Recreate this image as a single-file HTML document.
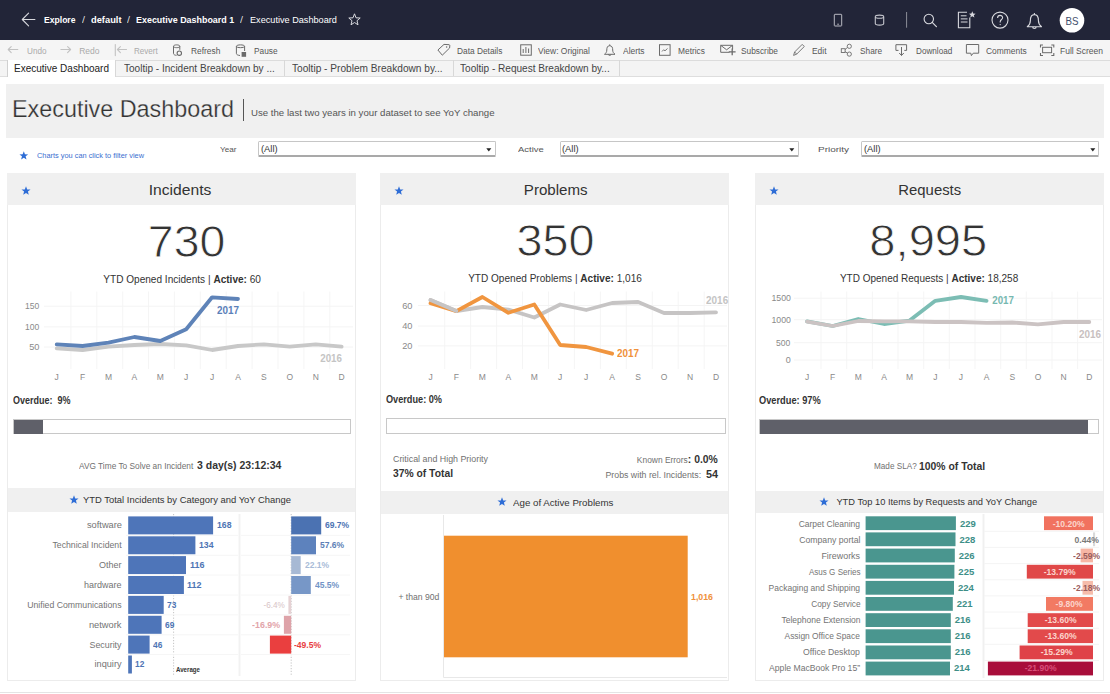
<!DOCTYPE html><html><head><meta charset="utf-8"><style>
html,body{margin:0;padding:0;width:1110px;height:694px;overflow:hidden;background:#fff;font-family:"Liberation Sans",sans-serif;}
#root{position:relative;width:1110px;height:694px;overflow:hidden;}
.t{position:absolute;white-space:nowrap;line-height:20px;}
.a{position:absolute;}
b{font-weight:700;}
</style></head><body><div id="root"><div class="a" style="left:0px;top:0px;width:1110px;height:40px;background:#222538;"></div>
<div class="a" style="left:0px;top:40px;width:1110px;height:20px;background:#f5f5f5;"></div>
<div class="a" style="left:0px;top:60px;width:1110px;height:16px;background:#f4f4f4;"></div>
<div class="a" style="left:0px;top:60px;width:1110px;height:1px;background:#dcdcdc;"></div>
<div class="a" style="left:0px;top:76px;width:1110px;height:1px;background:#dedede;"></div>
<div class="a" style="left:6.5px;top:60px;width:109px;height:17px;background:#fff;border-left:1px solid #d0d0d0;border-right:1px solid #d8d8d8;box-sizing:border-box;"></div>
<div class="a" style="left:284px;top:60px;width:1px;height:16px;background:#d8d8d8;"></div>
<div class="a" style="left:452.8px;top:60px;width:1px;height:16px;background:#d8d8d8;"></div>
<div class="a" style="left:619px;top:60px;width:1px;height:16px;background:#d8d8d8;"></div>
<div class="a" style="left:0px;top:77px;width:1110px;height:617px;background:#fff;"></div>
<div class="a" style="left:6px;top:84px;width:1098px;height:53.5px;background:#f0f0f0;"></div>
<div class="a" style="left:243px;top:98.5px;width:1.2px;height:22.3px;background:#555;"></div>
<div class="a" style="left:0px;top:691.5px;width:1110px;height:1.3px;background:#e4e4e4;"></div>
<svg class="a" style="left:19.2px;top:151.2px" width="9.6" height="9.6" viewBox="-10 -10 20 20"><path d="M0,-9.5 L2.4,-3.1 9.1,-2.9 3.8,1.2 5.6,7.7 0,4 -5.6,7.7 -3.8,1.2 -9.1,-2.9 -2.4,-3.1Z" fill="#2e6dd6"/></svg>
<div class="a" style="left:258.4px;top:141.3px;width:237.70000000000005px;height:15.6px;box-sizing:border-box;border:1px solid #c6c6c6;border-bottom:2px solid #a9a9a9;border-radius:1.5px;background:#fff"></div>
<svg class="a" style="left:486.3px;top:147.6px" width="6" height="5"><path d="M0.3,0.3 L5.3,0.3 2.8,3.6Z" fill="#222"/></svg>
<div class="a" style="left:559.5px;top:141.3px;width:239.10000000000002px;height:15.6px;box-sizing:border-box;border:1px solid #c6c6c6;border-bottom:2px solid #a9a9a9;border-radius:1.5px;background:#fff"></div>
<svg class="a" style="left:788.8000000000001px;top:147.6px" width="6" height="5"><path d="M0.3,0.3 L5.3,0.3 2.8,3.6Z" fill="#222"/></svg>
<div class="a" style="left:861.4px;top:141.3px;width:238.0000000000001px;height:15.6px;box-sizing:border-box;border:1px solid #c6c6c6;border-bottom:2px solid #a9a9a9;border-radius:1.5px;background:#fff"></div>
<svg class="a" style="left:1089.6000000000001px;top:147.6px" width="6" height="5"><path d="M0.3,0.3 L5.3,0.3 2.8,3.6Z" fill="#222"/></svg>
<div class="a" style="left:7px;top:173px;width:349px;height:507.5px;box-sizing:border-box;border:1px solid #ececec;background:#fff"></div>
<div class="a" style="left:7px;top:173px;width:349px;height:32px;background:#f0f0f0;"></div>
<div class="a" style="left:380px;top:173px;width:349px;height:507.5px;box-sizing:border-box;border:1px solid #ececec;background:#fff"></div>
<div class="a" style="left:380px;top:173px;width:349px;height:32px;background:#f0f0f0;"></div>
<div class="a" style="left:755px;top:173px;width:349px;height:507.5px;box-sizing:border-box;border:1px solid #ececec;background:#fff"></div>
<div class="a" style="left:755px;top:173px;width:349px;height:32px;background:#f0f0f0;"></div>
<svg class="a" style="left:21px;top:186px" width="10" height="10" viewBox="-10 -10 20 20"><path d="M0,-9.5 L2.4,-3.1 9.1,-2.9 3.8,1.2 5.6,7.7 0,4 -5.6,7.7 -3.8,1.2 -9.1,-2.9 -2.4,-3.1Z" fill="#2e6dd6"/></svg>
<svg class="a" style="left:394px;top:185.5px" width="10" height="10" viewBox="-10 -10 20 20"><path d="M0,-9.5 L2.4,-3.1 9.1,-2.9 3.8,1.2 5.6,7.7 0,4 -5.6,7.7 -3.8,1.2 -9.1,-2.9 -2.4,-3.1Z" fill="#2e6dd6"/></svg>
<svg class="a" style="left:769px;top:185.5px" width="10" height="10" viewBox="-10 -10 20 20"><path d="M0,-9.5 L2.4,-3.1 9.1,-2.9 3.8,1.2 5.6,7.7 0,4 -5.6,7.7 -3.8,1.2 -9.1,-2.9 -2.4,-3.1Z" fill="#2e6dd6"/></svg>
<svg class="a" style="left:0;top:0" width="1110" height="694"><line x1="70.9" y1="291.5" x2="70.9" y2="369" stroke="#f5f5f5" stroke-width="1"/><line x1="96.8" y1="291.5" x2="96.8" y2="369" stroke="#f5f5f5" stroke-width="1"/><line x1="122.7" y1="291.5" x2="122.7" y2="369" stroke="#f5f5f5" stroke-width="1"/><line x1="148.5" y1="291.5" x2="148.5" y2="369" stroke="#f5f5f5" stroke-width="1"/><line x1="174.4" y1="291.5" x2="174.4" y2="369" stroke="#f5f5f5" stroke-width="1"/><line x1="200.3" y1="291.5" x2="200.3" y2="369" stroke="#f5f5f5" stroke-width="1"/><line x1="226.2" y1="291.5" x2="226.2" y2="369" stroke="#f5f5f5" stroke-width="1"/><line x1="252.1" y1="291.5" x2="252.1" y2="369" stroke="#f5f5f5" stroke-width="1"/><line x1="278.0" y1="291.5" x2="278.0" y2="369" stroke="#f5f5f5" stroke-width="1"/><line x1="303.9" y1="291.5" x2="303.9" y2="369" stroke="#f5f5f5" stroke-width="1"/><line x1="329.8" y1="291.5" x2="329.8" y2="369" stroke="#f5f5f5" stroke-width="1"/><line x1="44" y1="306.2" x2="353" y2="306.2" stroke="#f4f4f4" stroke-width="1"/><line x1="44" y1="326.9" x2="353" y2="326.9" stroke="#f4f4f4" stroke-width="1"/><line x1="44" y1="347" x2="353" y2="347" stroke="#f4f4f4" stroke-width="1"/><polyline points="56.7,348.3 82.6,350 108.5,346.7 134.4,345 160.3,344 186.2,345.3 212.1,350 238.0,346 263.9,344.3 289.8,346.7 315.7,344.3 341.6,346.7" fill="none" stroke="#c8c8c8" stroke-width="3.8" stroke-linejoin="round" stroke-linecap="round"/><polyline points="56.7,344.3 82.6,346 108.5,342.7 134.4,337 160.3,341 186.2,329.3 212.1,297.3 238.0,299" fill="none" stroke="#5e83b8" stroke-width="3.8" stroke-linejoin="round" stroke-linecap="round"/><line x1="444.7" y1="291.5" x2="444.7" y2="369" stroke="#f5f5f5" stroke-width="1"/><line x1="470.6" y1="291.5" x2="470.6" y2="369" stroke="#f5f5f5" stroke-width="1"/><line x1="496.6" y1="291.5" x2="496.6" y2="369" stroke="#f5f5f5" stroke-width="1"/><line x1="522.5" y1="291.5" x2="522.5" y2="369" stroke="#f5f5f5" stroke-width="1"/><line x1="548.5" y1="291.5" x2="548.5" y2="369" stroke="#f5f5f5" stroke-width="1"/><line x1="574.4" y1="291.5" x2="574.4" y2="369" stroke="#f5f5f5" stroke-width="1"/><line x1="600.4" y1="291.5" x2="600.4" y2="369" stroke="#f5f5f5" stroke-width="1"/><line x1="626.3" y1="291.5" x2="626.3" y2="369" stroke="#f5f5f5" stroke-width="1"/><line x1="652.3" y1="291.5" x2="652.3" y2="369" stroke="#f5f5f5" stroke-width="1"/><line x1="678.2" y1="291.5" x2="678.2" y2="369" stroke="#f5f5f5" stroke-width="1"/><line x1="704.2" y1="291.5" x2="704.2" y2="369" stroke="#f5f5f5" stroke-width="1"/><line x1="418" y1="305.5" x2="727" y2="305.5" stroke="#f4f4f4" stroke-width="1"/><line x1="418" y1="326" x2="727" y2="326" stroke="#f4f4f4" stroke-width="1"/><line x1="418" y1="345.9" x2="727" y2="345.9" stroke="#f4f4f4" stroke-width="1"/><polyline points="430.5,300 456.4,311 482.4,307 508.4,309.6 534.3,317.5 560.2,304.5 586.2,310 612.1,303 638.1,302 664.0,313 690.0,313 716.0,312.4" fill="none" stroke="#c6c4c4" stroke-width="3.8" stroke-linejoin="round" stroke-linecap="round"/><polyline points="430.5,303.3 456.4,311.2 482.4,297 508.4,312.8 534.3,304.5 560.2,345 586.2,347 612.1,353.7" fill="none" stroke="#f0953f" stroke-width="3.8" stroke-linejoin="round" stroke-linecap="round"/><polyline points="430.5,300 456.4,311" fill="none" stroke="#c6c4c4" stroke-width="3.8" stroke-linejoin="round" stroke-linecap="round"/><line x1="821.0" y1="291.5" x2="821.0" y2="369" stroke="#f5f5f5" stroke-width="1"/><line x1="846.7" y1="291.5" x2="846.7" y2="369" stroke="#f5f5f5" stroke-width="1"/><line x1="872.4" y1="291.5" x2="872.4" y2="369" stroke="#f5f5f5" stroke-width="1"/><line x1="898.0" y1="291.5" x2="898.0" y2="369" stroke="#f5f5f5" stroke-width="1"/><line x1="923.7" y1="291.5" x2="923.7" y2="369" stroke="#f5f5f5" stroke-width="1"/><line x1="949.3" y1="291.5" x2="949.3" y2="369" stroke="#f5f5f5" stroke-width="1"/><line x1="975.0" y1="291.5" x2="975.0" y2="369" stroke="#f5f5f5" stroke-width="1"/><line x1="1000.7" y1="291.5" x2="1000.7" y2="369" stroke="#f5f5f5" stroke-width="1"/><line x1="1026.3" y1="291.5" x2="1026.3" y2="369" stroke="#f5f5f5" stroke-width="1"/><line x1="1052.0" y1="291.5" x2="1052.0" y2="369" stroke="#f5f5f5" stroke-width="1"/><line x1="1077.6" y1="291.5" x2="1077.6" y2="369" stroke="#f5f5f5" stroke-width="1"/><line x1="794" y1="298.2" x2="1102" y2="298.2" stroke="#f4f4f4" stroke-width="1"/><line x1="794" y1="319.7" x2="1102" y2="319.7" stroke="#f4f4f4" stroke-width="1"/><line x1="794" y1="342.7" x2="1102" y2="342.7" stroke="#f4f4f4" stroke-width="1"/><line x1="794" y1="360" x2="1102" y2="360" stroke="#f4f4f4" stroke-width="1"/><polyline points="807.0,321.3 832.7,326 858.3,319 884.0,324 909.6,320.6 935.3,300.8 961.0,297 986.6,300.8" fill="none" stroke="#7cbdb4" stroke-width="3.8" stroke-linejoin="round" stroke-linecap="round"/><polyline points="807.0,321.6 832.7,326 858.3,321 884.0,321.4 909.6,321.4 935.3,322 961.0,322 986.6,322.8 1012.3,322.5 1037.9,324.4 1063.6,322 1089.3,322" fill="none" stroke="#cbc3c3" stroke-width="3.8" stroke-linejoin="round" stroke-linecap="round"/></svg>
<div class="a" style="left:13.3px;top:419.3px;width:337.4px;height:15px;box-sizing:border-box;border:1px solid #c8c8c8;background:#fff"></div>
<div class="a" style="left:13.8px;top:419.8px;width:28.8px;height:14px;background:#5f6069;"></div>
<div class="a" style="left:385.7px;top:418.3px;width:340px;height:16px;box-sizing:border-box;border:1px solid #c8c8c8;background:#fff"></div>
<div class="a" style="left:759.3px;top:419px;width:339.7px;height:15.3px;box-sizing:border-box;border:1px solid #c8c8c8;background:#fff"></div>
<div class="a" style="left:759.8px;top:419.5px;width:328px;height:14.3px;background:#5f6069;"></div>
<div class="a" style="left:8px;top:488.2px;width:347px;height:24px;background:#f0f0f0;"></div>
<div class="a" style="left:381px;top:490.5px;width:347px;height:23.5px;background:#f0f0f0;"></div>
<div class="a" style="left:756px;top:490.5px;width:347px;height:22.5px;background:#f0f0f0;"></div>
<svg class="a" style="left:68.8px;top:495.2px" width="10" height="10" viewBox="-10 -10 20 20"><path d="M0,-9.5 L2.4,-3.1 9.1,-2.9 3.8,1.2 5.6,7.7 0,4 -5.6,7.7 -3.8,1.2 -9.1,-2.9 -2.4,-3.1Z" fill="#2e6dd6"/></svg>
<svg class="a" style="left:497.2px;top:497.3px" width="10" height="10" viewBox="-10 -10 20 20"><path d="M0,-9.5 L2.4,-3.1 9.1,-2.9 3.8,1.2 5.6,7.7 0,4 -5.6,7.7 -3.8,1.2 -9.1,-2.9 -2.4,-3.1Z" fill="#2e6dd6"/></svg>
<svg class="a" style="left:818.8px;top:496.8px" width="10" height="10" viewBox="-10 -10 20 20"><path d="M0,-9.5 L2.4,-3.1 9.1,-2.9 3.8,1.2 5.6,7.7 0,4 -5.6,7.7 -3.8,1.2 -9.1,-2.9 -2.4,-3.1Z" fill="#2e6dd6"/></svg>
<svg class="a" style="left:0;top:0" width="1110" height="694"><rect x="126" y="514" width="112" height="162" fill="#fff"/><line x1="173.6" y1="514" x2="173.6" y2="676" stroke="#aaa" stroke-width="0.7" stroke-dasharray="1.2,1.6"/><line x1="291.2" y1="514" x2="291.2" y2="676" stroke="#aaa" stroke-width="0.7" stroke-dasharray="1.2,1.6"/><rect x="128.2" y="516.4" width="84.9" height="18" fill="#4e75b9"/><line x1="126" y1="535.4" x2="238" y2="535.4" stroke="#f6f6f6" stroke-width="1"/><line x1="241" y1="535.4" x2="350" y2="535.4" stroke="#f6f6f6" stroke-width="1"/><rect x="291.2" y="516.4" width="30.0" height="18" fill="#4b72b2"/><rect x="128.2" y="536.3" width="67.2" height="18" fill="#4e75b9"/><line x1="126" y1="555.3" x2="238" y2="555.3" stroke="#f6f6f6" stroke-width="1"/><line x1="241" y1="555.3" x2="350" y2="555.3" stroke="#f6f6f6" stroke-width="1"/><rect x="291.2" y="536.3" width="24.8" height="18" fill="#5d82bd"/><rect x="128.2" y="556.1" width="57.8" height="18" fill="#4e75b9"/><line x1="126" y1="575.1" x2="238" y2="575.1" stroke="#f6f6f6" stroke-width="1"/><line x1="241" y1="575.1" x2="350" y2="575.1" stroke="#f6f6f6" stroke-width="1"/><rect x="291.2" y="556.1" width="9.5" height="18" fill="#a7b9d4"/><rect x="128.2" y="576.0" width="55.7" height="18" fill="#4e75b9"/><line x1="126" y1="595.0" x2="238" y2="595.0" stroke="#f6f6f6" stroke-width="1"/><line x1="241" y1="595.0" x2="350" y2="595.0" stroke="#f6f6f6" stroke-width="1"/><rect x="291.2" y="576.0" width="19.6" height="18" fill="#7797c7"/><rect x="128.2" y="595.9" width="35.5" height="18" fill="#4e75b9"/><line x1="126" y1="614.9" x2="238" y2="614.9" stroke="#f6f6f6" stroke-width="1"/><line x1="241" y1="614.9" x2="350" y2="614.9" stroke="#f6f6f6" stroke-width="1"/><rect x="288.4" y="595.9" width="2.8" height="18" fill="#e6d2d4"/><rect x="128.2" y="615.8" width="33.4" height="18" fill="#4e75b9"/><line x1="126" y1="634.8" x2="238" y2="634.8" stroke="#f6f6f6" stroke-width="1"/><line x1="241" y1="634.8" x2="350" y2="634.8" stroke="#f6f6f6" stroke-width="1"/><rect x="283.9" y="615.8" width="7.3" height="18" fill="#dea3a9"/><rect x="128.2" y="635.6" width="21.4" height="18" fill="#4e75b9"/><line x1="126" y1="654.6" x2="238" y2="654.6" stroke="#f6f6f6" stroke-width="1"/><line x1="241" y1="654.6" x2="350" y2="654.6" stroke="#f6f6f6" stroke-width="1"/><rect x="269.9" y="635.6" width="21.3" height="18" fill="#ea3f3f"/><rect x="128.2" y="655.5" width="3.7" height="18" fill="#4e75b9"/><line x1="239.5" y1="514" x2="239.5" y2="676" stroke="#f2f2f2" stroke-width="2"/><rect x="443.3" y="535.7" width="244.4" height="121.6" fill="#f08f2e"/><line x1="443.5" y1="515" x2="443.5" y2="677.5" stroke="#e8e8e8" stroke-width="1"/><line x1="443.5" y1="677.5" x2="727" y2="677.5" stroke="#e8e8e8" stroke-width="1"/><line x1="983.5" y1="514" x2="983.5" y2="678" stroke="#f0f0f0" stroke-width="2"/><rect x="865.6" y="516.3" width="90.3" height="13.8" fill="#4a968f"/><line x1="984" y1="531.3" x2="1099" y2="531.3" stroke="#f4f4f4" stroke-width="1"/><rect x="1044.0" y="516.3" width="49.0" height="13.8" fill="#f1725f"/><rect x="865.6" y="532.4" width="89.9" height="13.8" fill="#4a968f"/><line x1="984" y1="547.4" x2="1099" y2="547.4" stroke="#f4f4f4" stroke-width="1"/><rect x="1093" y="532.4" width="2.1" height="13.8" fill="#d9d9d9"/><rect x="865.6" y="548.6" width="89.2" height="13.8" fill="#4a968f"/><line x1="984" y1="563.6" x2="1099" y2="563.6" stroke="#f4f4f4" stroke-width="1"/><rect x="1080.6" y="548.6" width="12.4" height="13.8" fill="#f6b5a4"/><rect x="865.6" y="564.8" width="88.8" height="13.8" fill="#4a968f"/><line x1="984" y1="579.8" x2="1099" y2="579.8" stroke="#f4f4f4" stroke-width="1"/><rect x="1026.8" y="564.8" width="66.2" height="13.8" fill="#e04848"/><rect x="865.6" y="580.9" width="88.4" height="13.8" fill="#4a968f"/><line x1="984" y1="595.9" x2="1099" y2="595.9" stroke="#f4f4f4" stroke-width="1"/><rect x="1082.5" y="580.9" width="10.5" height="13.8" fill="#f6bcab"/><rect x="865.6" y="597.0" width="87.2" height="13.8" fill="#4a968f"/><line x1="984" y1="612.0" x2="1099" y2="612.0" stroke="#f4f4f4" stroke-width="1"/><rect x="1046.0" y="597.0" width="47.0" height="13.8" fill="#f27a63"/><rect x="865.6" y="613.2" width="85.2" height="13.8" fill="#4a968f"/><line x1="984" y1="628.2" x2="1099" y2="628.2" stroke="#f4f4f4" stroke-width="1"/><rect x="1027.7" y="613.2" width="65.3" height="13.8" fill="#e24a4b"/><rect x="865.6" y="629.3" width="85.2" height="13.8" fill="#4a968f"/><line x1="984" y1="644.3" x2="1099" y2="644.3" stroke="#f4f4f4" stroke-width="1"/><rect x="1027.7" y="629.3" width="65.3" height="13.8" fill="#e24a4b"/><rect x="865.6" y="645.5" width="85.2" height="13.8" fill="#4a968f"/><line x1="984" y1="660.5" x2="1099" y2="660.5" stroke="#f4f4f4" stroke-width="1"/><rect x="1019.6" y="645.5" width="73.4" height="13.8" fill="#df4248"/><rect x="865.6" y="661.6" width="84.4" height="13.8" fill="#4a968f"/><rect x="987.9" y="661.6" width="105.1" height="13.8" fill="#a80d3a"/></svg>
<svg class="a" style="left:0;top:0" width="1110" height="694"><path d="M34.9,19.5 H22.3 M28.6,13.2 L22.3,19.5 L28.6,25.8" fill="none" stroke="#d8d9de" stroke-width="1.1" stroke-linecap="round" stroke-linejoin="round"/><path d="M354.5,13.8 L356,17.8 360.2,18 357,20.7 358,24.8 354.5,22.5 351,24.8 352,20.7 348.8,18 353,17.8Z" fill="none" stroke="#d8d9de" stroke-width="1" stroke-linejoin="round"/><rect x="834.3" y="14.3" width="7.4" height="11.7" rx="0.6" fill="none" stroke="#b9bac2" stroke-width="1"/><rect x="837.4" y="23.6" width="1.3" height="1.3" fill="#b9bac2"/><path d="M875.3,16.8 V23.6 C875.3,25.6 883.7,25.6 883.7,23.6 V16.8 C883.7,14.6 875.3,14.6 875.3,16.8 C875.3,18.8 883.7,18.8 883.7,16.8" fill="none" stroke="#c4c5cc" stroke-width="1.1"/><line x1="906.6" y1="12" x2="906.6" y2="27.7" stroke="#8d8f99" stroke-width="1"/><circle cx="928.8" cy="19" r="4.7" fill="none" stroke="#d8d9de" stroke-width="1.1"/><line x1="932.2" y1="22.4" x2="936.4" y2="26.6" stroke="#d8d9de" stroke-width="1.2" stroke-linecap="round"/><path d="M969.8,17.5 V27.8 H958.4 V12.2 H967" fill="none" stroke="#d8d9de" stroke-width="1.1"/><path d="M960.8,15.8 H966.5 M960.8,18.9 H967.5 M960.8,22 H967.5" stroke="#d8d9de" stroke-width="1"/><path d="M972.3,11.3 L973.2,13.6 975.6,13.7 973.8,15.2 974.4,17.6 972.3,16.2 970.2,17.6 970.8,15.2 969,13.7 971.4,13.6Z" fill="#d8d9de"/><circle cx="1000" cy="20.1" r="8" fill="none" stroke="#d8d9de" stroke-width="1.1"/><path d="M997.6,17.9 C997.6,14.6 1002.6,14.6 1002.6,17.7 C1002.6,19.5 1000.2,19.6 1000.2,21.8 V22.5" fill="none" stroke="#d8d9de" stroke-width="1.1"/><circle cx="1000.2" cy="24.6" r="0.7" fill="#d8d9de"/><path d="M1034.4,14.6 C1031,14.6 1030.4,17.5 1030.4,20.5 C1030.4,23.5 1029.5,25 1027.3,26.8 H1041.5 C1039.3,25 1038.4,23.5 1038.4,20.5 C1038.4,17.5 1037.8,14.6 1034.4,14.6Z M1032.6,26.8 C1032.6,29 1036.2,29 1036.2,26.8 M1034.4,13 V14.6" fill="none" stroke="#d8d9de" stroke-width="1.1" stroke-linejoin="round"/><circle cx="1072" cy="20.2" r="12.3" fill="#ffffff"/><path d="M17.8,49.5 H8.2 M11.2,46.6 L8.2,49.5 L11.2,52.6" fill="none" stroke="#c2c2c2" stroke-width="1.1" stroke-linecap="round" stroke-linejoin="round"/><path d="M60.9,49.5 H70.6 M67.6,46.6 L70.6,49.5 L67.6,52.6" fill="none" stroke="#c2c2c2" stroke-width="1.1" stroke-linecap="round" stroke-linejoin="round"/><path d="M115.3,44.5 V55.6 M126.5,49.5 H117.4 M120.4,46.6 L117.4,49.5 L120.4,52.6" fill="none" stroke="#c2c2c2" stroke-width="1.1" stroke-linecap="round" stroke-linejoin="round"/><path d="M179.8,46.3 C179.8,44.4 173.5,44.4 173.5,46.3 V53.4 C173.5,54.7 175,55.2 176.5,55.4 M173.5,46.3 C173.5,48.1 179.8,48.1 179.8,46.3 V49.8" fill="none" stroke="#6b6b6b" stroke-width="1"/><circle cx="179.3" cy="53.2" r="2.2" fill="none" stroke="#6b6b6b" stroke-width="1.1"/><path d="M244.6,46.3 C244.6,44.4 236.4,44.4 236.4,46.3 V53.4 C236.4,54.8 238.2,55.3 240,55.5 M236.4,46.3 C236.4,48.1 244.6,48.1 244.6,46.3 V51" fill="none" stroke="#6b6b6b" stroke-width="1"/><rect x="241.6" y="52" width="4.5" height="4.8" fill="#6b6b6b"/><path d="M437.9,50 L444,44.4 L449.2,44.7 Q449.8,44.9 449.8,45.6 L449.6,48 L442.3,55.2Z" fill="none" stroke="#6b6b6b" stroke-width="1" stroke-linejoin="round"/><circle cx="446.6" cy="47.1" r="0.75" fill="#6b6b6b"/><rect x="520.7" y="44.8" width="10.6" height="10.4" fill="none" stroke="#6b6b6b" stroke-width="1"/><path d="M523.2,49 V53 M525.9,47 V53 M528.6,48.5 V53" stroke="#6b6b6b" stroke-width="1"/><path d="M609.7,45.7 C607.3,45.7 606.8,47.8 606.8,50 C606.8,52.2 606,53 604.5,54.3 H615 C613.5,53 612.7,52.2 612.7,50 C612.7,47.8 612.1,45.7 609.7,45.7Z M608.3,54.3 C608.3,55.8 611.1,55.8 611.1,54.3 M609.7,44.4 V45.7" fill="none" stroke="#6b6b6b" stroke-width="1" stroke-linejoin="round"/><rect x="659.5" y="44.7" width="10.6" height="10.6" fill="none" stroke="#6b6b6b" stroke-width="1"/><path d="M662,51.5 L663.6,49.8 L665,50.8 L667.5,48.5" fill="none" stroke="#6b6b6b" stroke-width="0.9"/><path d="M729.5,52.3 H720.7 V45.3 H732.6 V49.5 M720.7,45.3 L726.6,49.8 L732.6,45.3" fill="none" stroke="#6b6b6b" stroke-width="1"/><path d="M732.2,48.5 V55.3 M728.8,51.9 H735.6" stroke="#6b6b6b" stroke-width="1.3"/><path d="M793.6,55.4 L794.6,52 L802.2,44.4 L804.3,46.5 L796.7,54.1Z M794.6,52 L796.7,54.1" fill="none" stroke="#6b6b6b" stroke-width="0.9" stroke-linejoin="round"/><rect x="841.3" y="48.7" width="3.8" height="3.8" fill="none" stroke="#6b6b6b" stroke-width="0.9"/><circle cx="849.3" cy="46.3" r="2.1" fill="none" stroke="#6b6b6b" stroke-width="0.9"/><circle cx="849.3" cy="54.1" r="2.1" fill="none" stroke="#6b6b6b" stroke-width="0.9"/><path d="M845.1,49.6 L847.4,47.4 M845.1,51.7 L847.4,53" stroke="#6b6b6b" stroke-width="0.9"/><path d="M898.5,50.4 H895.9 V44.7 H906.6 V50.4 H904.3" fill="none" stroke="#6b6b6b" stroke-width="1"/><path d="M901.5,47 V55.4 M899.2,53 L901.5,55.5 L903.8,53" fill="none" stroke="#6b6b6b" stroke-width="1"/><path d="M966.4,44.5 H978.7 V53.2 H973.2 L971.4,55.6 L970.8,53.2 H966.4Z" fill="none" stroke="#6b6b6b" stroke-width="1" stroke-linejoin="round"/><path d="M1040.5,47.5 V45 H1043 M1051.3,45 H1053.8 V47.5 M1053.8,53 V55.5 H1051.3 M1043,55.5 H1040.5 V53" fill="none" stroke="#6b6b6b" stroke-width="1.1"/><rect x="1042.6" y="47.3" width="9" height="5.4" fill="none" stroke="#6b6b6b" stroke-width="1"/></svg><span class="t" style="font-size:9.5px;font-weight:700;color:#fff;top:10.20px;left:44.00px;transform:scaleX(0.9036);transform-origin:left center;">Explore</span><span class="t" style="font-size:9.5px;font-weight:400;color:#ddd;top:10.20px;left:82.00px;transform:scaleX(1.1361);transform-origin:left center;">/</span><span class="t" style="font-size:9.5px;font-weight:700;color:#fff;top:10.20px;left:90.50px;transform:scaleX(0.9794);transform-origin:left center;">default</span><span class="t" style="font-size:9.5px;font-weight:400;color:#ddd;top:10.20px;left:127.00px;transform:scaleX(1.1361);transform-origin:left center;">/</span><span class="t" style="font-size:9.5px;font-weight:700;color:#fff;top:10.20px;left:136.40px;transform:scaleX(0.9393);transform-origin:left center;">Executive Dashboard 1</span><span class="t" style="font-size:9.5px;font-weight:400;color:#ddd;top:10.20px;left:240.00px;transform:scaleX(1.1361);transform-origin:left center;">/</span><span class="t" style="font-size:9.5px;font-weight:400;color:#fff;top:10.20px;left:249.90px;transform:scaleX(0.9622);transform-origin:left center;">Executive Dashboard</span><span class="t" style="font-size:10.5px;font-weight:400;color:#3e4d6c;top:10.50px;left:1065.29px;transform:scaleX(0.9275);transform-origin:center center;">BS</span><span class="t" style="font-size:8.5px;font-weight:400;color:#aaa;top:41.20px;left:26.50px;transform:scaleX(0.9593);transform-origin:left center;">Undo</span><span class="t" style="font-size:8.5px;font-weight:400;color:#aaa;top:41.20px;left:79.20px;">Redo</span><span class="t" style="font-size:8.5px;font-weight:400;color:#aaa;top:41.20px;left:133.80px;transform:scaleX(0.9502);transform-origin:left center;">Revert</span><span class="t" style="font-size:8.5px;font-weight:400;color:#555;top:41.20px;left:191.00px;transform:scaleX(0.9844);transform-origin:left center;">Refresh</span><span class="t" style="font-size:8.5px;font-weight:400;color:#555;top:41.20px;left:254.00px;transform:scaleX(0.9789);transform-origin:left center;">Pause</span><span class="t" style="font-size:8.5px;font-weight:400;color:#555;top:41.20px;left:457.00px;transform:scaleX(0.9803);transform-origin:left center;">Data Details</span><span class="t" style="font-size:8.5px;font-weight:400;color:#555;top:41.20px;left:537.60px;transform:scaleX(0.9924);transform-origin:left center;">View: Original</span><span class="t" style="font-size:8.5px;font-weight:400;color:#555;top:41.20px;left:622.70px;transform:scaleX(0.9938);transform-origin:left center;">Alerts</span><span class="t" style="font-size:8.5px;font-weight:400;color:#555;top:41.20px;left:678.00px;transform:scaleX(0.9857);transform-origin:left center;">Metrics</span><span class="t" style="font-size:8.5px;font-weight:400;color:#555;top:41.20px;left:741.00px;transform:scaleX(0.9785);transform-origin:left center;">Subscribe</span><span class="t" style="font-size:8.5px;font-weight:400;color:#555;top:41.20px;left:812.00px;transform:scaleX(0.9893);transform-origin:left center;">Edit</span><span class="t" style="font-size:8.5px;font-weight:400;color:#555;top:41.20px;left:859.50px;transform:scaleX(0.9741);transform-origin:left center;">Share</span><span class="t" style="font-size:8.5px;font-weight:400;color:#555;top:41.20px;left:915.70px;transform:scaleX(0.9600);transform-origin:left center;">Download</span><span class="t" style="font-size:8.5px;font-weight:400;color:#555;top:41.20px;left:986.00px;transform:scaleX(0.9904);transform-origin:left center;">Comments</span><span class="t" style="font-size:8.5px;font-weight:400;color:#555;top:41.20px;left:1060.00px;">Full Screen</span><span class="t" style="font-size:11px;font-weight:400;color:#222;top:58.00px;left:14.00px;transform:scaleX(0.9085);transform-origin:left center;">Executive Dashboard</span><span class="t" style="font-size:11px;font-weight:400;color:#444;top:58.00px;left:123.50px;transform:scaleX(0.9134);transform-origin:left center;">Tooltip - Incident Breakdown by ...</span><span class="t" style="font-size:11px;font-weight:400;color:#444;top:58.00px;left:291.70px;transform:scaleX(0.9208);transform-origin:left center;">Tooltip - Problem Breakdown by...</span><span class="t" style="font-size:11px;font-weight:400;color:#444;top:58.00px;left:459.80px;transform:scaleX(0.9146);transform-origin:left center;">Tooltip - Request Breakdown by...</span><span class="t" style="font-size:24.5px;font-weight:400;color:#333;top:98.50px;left:12.30px;transform:scaleX(0.9532);transform-origin:left center;-webkit-text-stroke:0.25px #f0f0f0;">Executive Dashboard</span><span class="t" style="font-size:9.5px;font-weight:400;color:#555;top:103.30px;left:250.50px;transform:scaleX(1.0141);transform-origin:left center;">Use the last two years in your dataset to see YoY change</span><span class="t" style="font-size:7.5px;font-weight:400;color:#3a6fd0;top:146.20px;left:37.00px;transform:scaleX(0.9835);transform-origin:left center;">Charts you can click to filter view</span><span class="t" style="font-size:8px;font-weight:400;color:#555;top:139.50px;left:219.60px;transform:scaleX(1.0203);transform-origin:left center;">Year</span><span class="t" style="font-size:8px;font-weight:400;color:#555;top:139.50px;left:517.80px;transform:scaleX(1.1837);transform-origin:left center;">Active</span><span class="t" style="font-size:8px;font-weight:400;color:#555;top:139.50px;left:817.90px;transform:scaleX(1.2495);transform-origin:left center;">Priority</span><span class="t" style="font-size:9px;font-weight:400;color:#333;top:138.50px;left:260.70px;transform:scaleX(1.0375);transform-origin:left center;">(All)</span><span class="t" style="font-size:9px;font-weight:400;color:#333;top:138.50px;left:562.00px;transform:scaleX(1.0375);transform-origin:left center;">(All)</span><span class="t" style="font-size:9px;font-weight:400;color:#333;top:138.50px;left:864.00px;transform:scaleX(1.0375);transform-origin:left center;">(All)</span><span class="t" style="font-size:15.5px;font-weight:400;color:#333;top:179.60px;left:149.08px;transform:scaleX(1.0089);transform-origin:center center;">Incidents</span><span class="t" style="font-size:15.5px;font-weight:400;color:#333;top:179.60px;left:522.77px;transform:scaleX(0.9745);transform-origin:center center;">Problems</span><span class="t" style="font-size:15.5px;font-weight:400;color:#333;top:179.60px;left:897.26px;transform:scaleX(0.9590);transform-origin:center center;">Requests</span><span class="t" style="font-size:45px;font-weight:400;color:#333;top:231.80px;left:148.95px;transform:scaleX(1.0320);transform-origin:center center;-webkit-text-stroke:0.8px #fff;">730</span><span class="t" style="font-size:45px;font-weight:400;color:#333;top:231.30px;left:517.85px;transform:scaleX(1.0387);transform-origin:center center;-webkit-text-stroke:0.8px #fff;">350</span><span class="t" style="font-size:45px;font-weight:400;color:#333;top:231.30px;left:872.29px;transform:scaleX(1.0477);transform-origin:center center;-webkit-text-stroke:0.8px #fff;">8,995</span><span class="t" style="font-size:11px;font-weight:400;color:#333;top:268.50px;left:96.07px;transform:scaleX(0.9155);transform-origin:center center;">YTD Opened Incidents | <b>Active:</b> 60</span><span class="t" style="font-size:11px;font-weight:400;color:#333;top:267.60px;left:460.42px;transform:scaleX(0.9144);transform-origin:center center;">YTD Opened Problems | <b>Active:</b> 1,016</span><span class="t" style="font-size:11px;font-weight:400;color:#333;top:267.60px;left:830.55px;transform:scaleX(0.9093);transform-origin:center center;">YTD Opened Requests | <b>Active:</b> 18,258</span><span class="t" style="font-size:8.5px;font-weight:400;color:#8a8a8a;top:296.40px;left:25.31px;transform:scaleX(1.0079);transform-origin:right center;">150</span><span class="t" style="font-size:8.5px;font-weight:400;color:#8a8a8a;top:317.00px;left:25.31px;transform:scaleX(1.0079);transform-origin:right center;">100</span><span class="t" style="font-size:8.5px;font-weight:400;color:#8a8a8a;top:337.00px;left:30.03px;transform:scaleX(1.0878);transform-origin:right center;">50</span><span class="t" style="font-size:8.5px;font-weight:400;color:#8a8a8a;top:295.50px;left:403.03px;transform:scaleX(1.0878);transform-origin:right center;">60</span><span class="t" style="font-size:8.5px;font-weight:400;color:#8a8a8a;top:316.00px;left:403.03px;transform:scaleX(1.0878);transform-origin:right center;">40</span><span class="t" style="font-size:8.5px;font-weight:400;color:#8a8a8a;top:335.90px;left:403.03px;transform:scaleX(1.0878);transform-origin:right center;">20</span><span class="t" style="font-size:8.5px;font-weight:400;color:#8a8a8a;top:288.20px;left:771.68px;transform:scaleX(1.0306);transform-origin:right center;">1500</span><span class="t" style="font-size:8.5px;font-weight:400;color:#8a8a8a;top:309.70px;left:771.68px;transform:scaleX(1.0306);transform-origin:right center;">1000</span><span class="t" style="font-size:8.5px;font-weight:400;color:#8a8a8a;top:332.70px;left:776.41px;transform:scaleX(1.0079);transform-origin:right center;">500</span><span class="t" style="font-size:8.5px;font-weight:400;color:#8a8a8a;top:350.00px;left:785.87px;transform:scaleX(1.0561);transform-origin:right center;">0</span><span class="t" style="font-size:8.5px;font-weight:400;color:#8a8a8a;top:367.40px;left:54.58px;">J</span><span class="t" style="font-size:8.5px;font-weight:400;color:#8a8a8a;top:367.40px;left:428.38px;">J</span><span class="t" style="font-size:8.5px;font-weight:400;color:#8a8a8a;top:367.40px;left:804.88px;">J</span><span class="t" style="font-size:8.5px;font-weight:400;color:#8a8a8a;top:367.40px;left:80.00px;">F</span><span class="t" style="font-size:8.5px;font-weight:400;color:#8a8a8a;top:367.40px;left:453.85px;">F</span><span class="t" style="font-size:8.5px;font-weight:400;color:#8a8a8a;top:367.40px;left:830.06px;">F</span><span class="t" style="font-size:8.5px;font-weight:400;color:#8a8a8a;top:367.40px;left:104.95px;">M</span><span class="t" style="font-size:8.5px;font-weight:400;color:#8a8a8a;top:367.40px;left:478.85px;">M</span><span class="t" style="font-size:8.5px;font-weight:400;color:#8a8a8a;top:367.40px;left:854.77px;">M</span><span class="t" style="font-size:8.5px;font-weight:400;color:#8a8a8a;top:367.40px;left:131.56px;">A</span><span class="t" style="font-size:8.5px;font-weight:400;color:#8a8a8a;top:367.40px;left:505.51px;">A</span><span class="t" style="font-size:8.5px;font-weight:400;color:#8a8a8a;top:367.40px;left:881.14px;">A</span><span class="t" style="font-size:8.5px;font-weight:400;color:#8a8a8a;top:367.40px;left:156.75px;">M</span><span class="t" style="font-size:8.5px;font-weight:400;color:#8a8a8a;top:367.40px;left:530.75px;">M</span><span class="t" style="font-size:8.5px;font-weight:400;color:#8a8a8a;top:367.40px;left:906.09px;">M</span><span class="t" style="font-size:8.5px;font-weight:400;color:#8a8a8a;top:367.40px;left:184.07px;">J</span><span class="t" style="font-size:8.5px;font-weight:400;color:#8a8a8a;top:367.40px;left:558.12px;">J</span><span class="t" style="font-size:8.5px;font-weight:400;color:#8a8a8a;top:367.40px;left:933.17px;">J</span><span class="t" style="font-size:8.5px;font-weight:400;color:#8a8a8a;top:367.40px;left:209.97px;">J</span><span class="t" style="font-size:8.5px;font-weight:400;color:#8a8a8a;top:367.40px;left:584.08px;">J</span><span class="t" style="font-size:8.5px;font-weight:400;color:#8a8a8a;top:367.40px;left:958.84px;">J</span><span class="t" style="font-size:8.5px;font-weight:400;color:#8a8a8a;top:367.40px;left:235.16px;">A</span><span class="t" style="font-size:8.5px;font-weight:400;color:#8a8a8a;top:367.40px;left:609.31px;">A</span><span class="t" style="font-size:8.5px;font-weight:400;color:#8a8a8a;top:367.40px;left:983.78px;">A</span><span class="t" style="font-size:8.5px;font-weight:400;color:#8a8a8a;top:367.40px;left:261.06px;">S</span><span class="t" style="font-size:8.5px;font-weight:400;color:#8a8a8a;top:367.40px;left:635.26px;">S</span><span class="t" style="font-size:8.5px;font-weight:400;color:#8a8a8a;top:367.40px;left:1009.44px;">S</span><span class="t" style="font-size:8.5px;font-weight:400;color:#8a8a8a;top:367.40px;left:286.49px;">O</span><span class="t" style="font-size:8.5px;font-weight:400;color:#8a8a8a;top:367.40px;left:660.74px;">O</span><span class="t" style="font-size:8.5px;font-weight:400;color:#8a8a8a;top:367.40px;left:1034.63px;">O</span><span class="t" style="font-size:8.5px;font-weight:400;color:#8a8a8a;top:367.40px;left:312.63px;">N</span><span class="t" style="font-size:8.5px;font-weight:400;color:#8a8a8a;top:367.40px;left:686.93px;">N</span><span class="t" style="font-size:8.5px;font-weight:400;color:#8a8a8a;top:367.40px;left:1060.53px;">N</span><span class="t" style="font-size:8.5px;font-weight:400;color:#8a8a8a;top:367.40px;left:338.53px;">D</span><span class="t" style="font-size:8.5px;font-weight:400;color:#8a8a8a;top:367.40px;left:712.88px;">D</span><span class="t" style="font-size:8.5px;font-weight:400;color:#8a8a8a;top:367.40px;left:1086.19px;">D</span><span class="t" style="font-size:10px;font-weight:700;color:#5b80b9;top:301.00px;left:216.88px;transform:scaleX(0.9888);transform-origin:center center;">2017</span><span class="t" style="font-size:10px;font-weight:700;color:#c4c4c4;top:349.00px;left:319.88px;transform:scaleX(0.9753);transform-origin:center center;">2016</span><span class="t" style="font-size:10px;font-weight:700;color:#f0913a;top:344.00px;left:616.88px;transform:scaleX(0.9888);transform-origin:center center;">2017</span><span class="t" style="font-size:10px;font-weight:700;color:#c4c4c4;top:290.80px;left:706.38px;transform:scaleX(0.9933);transform-origin:center center;">2016</span><span class="t" style="font-size:10px;font-weight:700;color:#76b8b0;top:291.40px;left:991.67px;transform:scaleX(0.9708);transform-origin:center center;">2017</span><span class="t" style="font-size:10px;font-weight:700;color:#c8c0c0;top:324.50px;left:1078.88px;transform:scaleX(0.9888);transform-origin:center center;">2016</span><span class="t" style="font-size:10.5px;font-weight:700;color:#333;top:390.30px;left:13.00px;transform:scaleX(0.8566);transform-origin:left center;">Overdue:&nbsp; <b>9%</b></span><span class="t" style="font-size:10.5px;font-weight:700;color:#333;top:389.30px;left:385.70px;transform:scaleX(0.8722);transform-origin:left center;">Overdue: <b>0%</b></span><span class="t" style="font-size:10.5px;font-weight:700;color:#333;top:390.00px;left:759.30px;transform:scaleX(0.8810);transform-origin:left center;">Overdue: <b>97%</b></span><span class="t" style="font-size:8.5px;font-weight:400;color:#707070;top:455.70px;left:79.00px;transform:scaleX(0.9781);transform-origin:left center;">AVG Time To Solve an Incident</span><span class="t" style="font-size:11px;font-weight:700;color:#333;top:455.20px;left:197.30px;transform:scaleX(0.9518);transform-origin:left center;">3 day(s) 23:12:34</span><span class="t" style="font-size:8.5px;font-weight:400;color:#707070;top:449.00px;left:392.60px;transform:scaleX(1.0420);transform-origin:left center;">Critical and High Priority</span><span class="t" style="font-size:10.5px;font-weight:700;color:#333;top:462.80px;left:392.60px;transform:scaleX(0.9826);transform-origin:left center;">37% of Total</span><span class="t" style="font-size:8.5px;font-weight:400;color:#707070;top:449.00px;left:636.14px;transform:scaleX(0.9895);transform-origin:right center;">Known Errors<b style="font-size:10.5px;color:#333">: 0.0%</b></span><span class="t" style="font-size:8.5px;font-weight:400;color:#707070;top:463.70px;left:608.98px;transform:scaleX(1.0320);transform-origin:right center;">Probs with rel. Incidents:&nbsp; <b style="font-size:10.5px;color:#333">54</b></span><span class="t" style="font-size:8.5px;font-weight:400;color:#707070;top:455.90px;left:874.20px;transform:scaleX(0.9612);transform-origin:left center;">Made SLA?</span><span class="t" style="font-size:11px;font-weight:700;color:#333;top:455.90px;left:919.00px;transform:scaleX(0.9444);transform-origin:left center;">100% of Total</span><span class="t" style="font-size:9.3px;font-weight:400;color:#333;top:490.30px;left:82.70px;transform:scaleX(1.0129);transform-origin:left center;">YTD Total Incidents by Category and YoY Change</span><span class="t" style="font-size:9.3px;font-weight:400;color:#333;top:492.50px;left:513.00px;transform:scaleX(1.0445);transform-origin:left center;">Age of Active Problems</span><span class="t" style="font-size:9.3px;font-weight:400;color:#333;top:492.00px;left:836.40px;">YTD Top 10 Items by Requests and YoY Change</span><span class="t" style="font-size:9px;font-weight:400;color:#747474;top:515.40px;left:87.58px;transform:scaleX(1.0319);transform-origin:right center;">software</span><span class="t" style="font-size:9.5px;font-weight:700;color:#4e74b4;top:515.40px;left:216.56px;transform:scaleX(0.9143);transform-origin:left center;">168</span><span class="t" style="font-size:9.5px;font-weight:700;color:#4e74b4;top:515.40px;left:325.17px;transform:scaleX(0.8984);transform-origin:left center;">69.7%</span><span class="t" style="font-size:9px;font-weight:400;color:#747474;top:535.27px;left:50.05px;transform:scaleX(0.9658);transform-origin:right center;">Technical Incident</span><span class="t" style="font-size:9.5px;font-weight:700;color:#4e74b4;top:535.27px;left:198.88px;transform:scaleX(0.9143);transform-origin:left center;">134</span><span class="t" style="font-size:9.5px;font-weight:700;color:#5d7fb6;top:535.27px;left:319.97px;transform:scaleX(0.8984);transform-origin:left center;">57.6%</span><span class="t" style="font-size:9px;font-weight:400;color:#747474;top:555.14px;left:99.08px;">Other</span><span class="t" style="font-size:9.5px;font-weight:700;color:#4e74b4;top:555.14px;left:189.52px;transform:scaleX(0.9460);transform-origin:left center;">116</span><span class="t" style="font-size:9.5px;font-weight:700;color:#a9bcd8;top:555.14px;left:304.70px;transform:scaleX(0.8984);transform-origin:left center;">22.1%</span><span class="t" style="font-size:9px;font-weight:400;color:#747474;top:575.01px;left:84.07px;">hardware</span><span class="t" style="font-size:9.5px;font-weight:700;color:#4e74b4;top:575.01px;left:187.44px;transform:scaleX(0.9460);transform-origin:left center;">112</span><span class="t" style="font-size:9.5px;font-weight:700;color:#7394c6;top:575.01px;left:314.76px;transform:scaleX(0.8984);transform-origin:left center;">45.5%</span><span class="t" style="font-size:9px;font-weight:400;color:#747474;top:594.88px;left:24.05px;transform:scaleX(0.9677);transform-origin:right center;">Unified Communications</span><span class="t" style="font-size:9.5px;font-weight:700;color:#4e74b4;top:594.88px;left:167.16px;transform:scaleX(0.8792);transform-origin:left center;">73</span><span class="t" style="font-size:9.5px;font-weight:400;color:#d8c4c6;top:594.88px;left:259.62px;transform:scaleX(0.8619);transform-origin:right center;">-6.4%</span><span class="t" style="font-size:9px;font-weight:400;color:#747474;top:614.75px;left:90.08px;transform:scaleX(1.0344);transform-origin:right center;">network</span><span class="t" style="font-size:9.5px;font-weight:700;color:#4e74b4;top:614.75px;left:165.08px;transform:scaleX(0.8792);transform-origin:left center;">69</span><span class="t" style="font-size:9.5px;font-weight:700;color:#e2a4aa;top:614.75px;left:249.82px;transform:scaleX(0.9299);transform-origin:right center;">-16.9%</span><span class="t" style="font-size:9px;font-weight:400;color:#747474;top:634.62px;left:89.08px;transform:scaleX(0.9841);transform-origin:right center;">Security</span><span class="t" style="font-size:9.5px;font-weight:700;color:#4e74b4;top:634.62px;left:153.12px;transform:scaleX(0.8792);transform-origin:left center;">46</span><span class="t" style="font-size:9.5px;font-weight:700;color:#e8403f;top:634.62px;left:294.20px;transform:scaleX(0.8967);transform-origin:left center;">-49.5%</span><span class="t" style="font-size:9px;font-weight:400;color:#747474;top:654.49px;left:95.08px;transform:scaleX(1.0183);transform-origin:right center;">inquiry</span><span class="t" style="font-size:9.5px;font-weight:700;color:#4e74b4;top:654.49px;left:135.44px;transform:scaleX(0.8792);transform-origin:left center;">12</span><span class="t" style="font-size:6.5px;font-weight:700;color:#333;top:659.70px;left:176.00px;transform:scaleX(0.9441);transform-origin:left center;">Average</span><span class="t" style="font-size:8.5px;font-weight:400;color:#707070;top:587.30px;left:398.88px;transform:scaleX(1.0143);transform-origin:right center;">+ than 90d</span><span class="t" style="font-size:9px;font-weight:700;color:#f0913a;top:587.30px;left:690.70px;transform:scaleX(0.9764);transform-origin:left center;">1,016</span><span class="t" style="font-size:9px;font-weight:400;color:#747474;top:514.30px;left:795.05px;transform:scaleX(0.9439);transform-origin:right center;">Carpet Cleaning</span><span class="t" style="font-size:9.5px;font-weight:700;color:#3e8f88;top:514.30px;left:959.94px;">229</span><span class="t" style="font-size:9.5px;font-weight:700;color:#fbd5cd;top:514.00px;left:1050.82px;transform:scaleX(0.9042);transform-origin:center center;">-10.20%</span><span class="t" style="font-size:9px;font-weight:400;color:#747474;top:530.32px;left:796.55px;transform:scaleX(0.9662);transform-origin:right center;">Company portal</span><span class="t" style="font-size:9.5px;font-weight:700;color:#3e8f88;top:530.32px;left:959.55px;">228</span><span class="t" style="font-size:9.5px;font-weight:700;color:#7a7a7a;top:530.32px;left:1072.46px;transform:scaleX(0.9058);transform-origin:right center;">0.44%</span><span class="t" style="font-size:9px;font-weight:400;color:#747474;top:546.34px;left:821.08px;transform:scaleX(0.9893);transform-origin:right center;">Fireworks</span><span class="t" style="font-size:9.5px;font-weight:700;color:#3e8f88;top:546.34px;left:958.76px;">226</span><span class="t" style="font-size:9.5px;font-weight:700;color:#9a5c5c;top:546.34px;left:1069.89px;transform:scaleX(0.8967);transform-origin:right center;">-2.59%</span><span class="t" style="font-size:9px;font-weight:400;color:#747474;top:562.36px;left:802.57px;transform:scaleX(0.8969);transform-origin:right center;">Asus G Series</span><span class="t" style="font-size:9.5px;font-weight:700;color:#3e8f88;top:562.36px;left:958.36px;">225</span><span class="t" style="font-size:9.5px;font-weight:700;color:#fbd5cd;top:562.06px;left:1042.21px;transform:scaleX(0.9042);transform-origin:center center;">-13.79%</span><span class="t" style="font-size:9px;font-weight:400;color:#747474;top:578.38px;left:763.02px;transform:scaleX(0.9425);transform-origin:right center;">Packaging and Shipping</span><span class="t" style="font-size:9.5px;font-weight:700;color:#3e8f88;top:578.38px;left:957.97px;">224</span><span class="t" style="font-size:9.5px;font-weight:700;color:#9a5c5c;top:578.38px;left:1069.89px;transform:scaleX(0.8967);transform-origin:right center;">-2.18%</span><span class="t" style="font-size:9px;font-weight:400;color:#747474;top:594.40px;left:806.57px;transform:scaleX(0.9210);transform-origin:right center;">Copy Service</span><span class="t" style="font-size:9.5px;font-weight:700;color:#3e8f88;top:594.40px;left:956.78px;">221</span><span class="t" style="font-size:9.5px;font-weight:700;color:#fbd5cd;top:594.10px;left:1054.43px;transform:scaleX(0.8967);transform-origin:center center;">-9.80%</span><span class="t" style="font-size:9px;font-weight:400;color:#747474;top:610.42px;left:776.54px;transform:scaleX(0.9466);transform-origin:right center;">Telephone Extension</span><span class="t" style="font-size:9.5px;font-weight:700;color:#3e8f88;top:610.42px;left:954.81px;">216</span><span class="t" style="font-size:9.5px;font-weight:700;color:#fbd5cd;top:610.12px;left:1042.66px;transform:scaleX(0.9042);transform-origin:center center;">-13.60%</span><span class="t" style="font-size:9px;font-weight:400;color:#747474;top:626.44px;left:779.21px;transform:scaleX(0.9309);transform-origin:right center;">Assign Office Space</span><span class="t" style="font-size:9.5px;font-weight:700;color:#3e8f88;top:626.44px;left:954.81px;">216</span><span class="t" style="font-size:9.5px;font-weight:700;color:#fbd5cd;top:626.14px;left:1042.66px;transform:scaleX(0.9042);transform-origin:center center;">-13.60%</span><span class="t" style="font-size:9px;font-weight:400;color:#747474;top:642.46px;left:801.23px;transform:scaleX(0.9648);transform-origin:right center;">Office Desktop</span><span class="t" style="font-size:9.5px;font-weight:700;color:#3e8f88;top:642.46px;left:954.81px;">216</span><span class="t" style="font-size:9.5px;font-weight:700;color:#fbd5cd;top:642.16px;left:1038.61px;transform:scaleX(0.9042);transform-origin:center center;">-15.29%</span><span class="t" style="font-size:9px;font-weight:400;color:#747474;top:658.48px;left:765.04px;transform:scaleX(0.9573);transform-origin:right center;">Apple MacBook Pro 15&rdquo;</span><span class="t" style="font-size:9.5px;font-weight:700;color:#3e8f88;top:658.48px;left:954.02px;">214</span><span class="t" style="font-size:9.5px;font-weight:700;color:#d8507a;top:658.18px;left:1022.74px;transform:scaleX(0.9042);transform-origin:center center;">-21.90%</span></div></body></html>
